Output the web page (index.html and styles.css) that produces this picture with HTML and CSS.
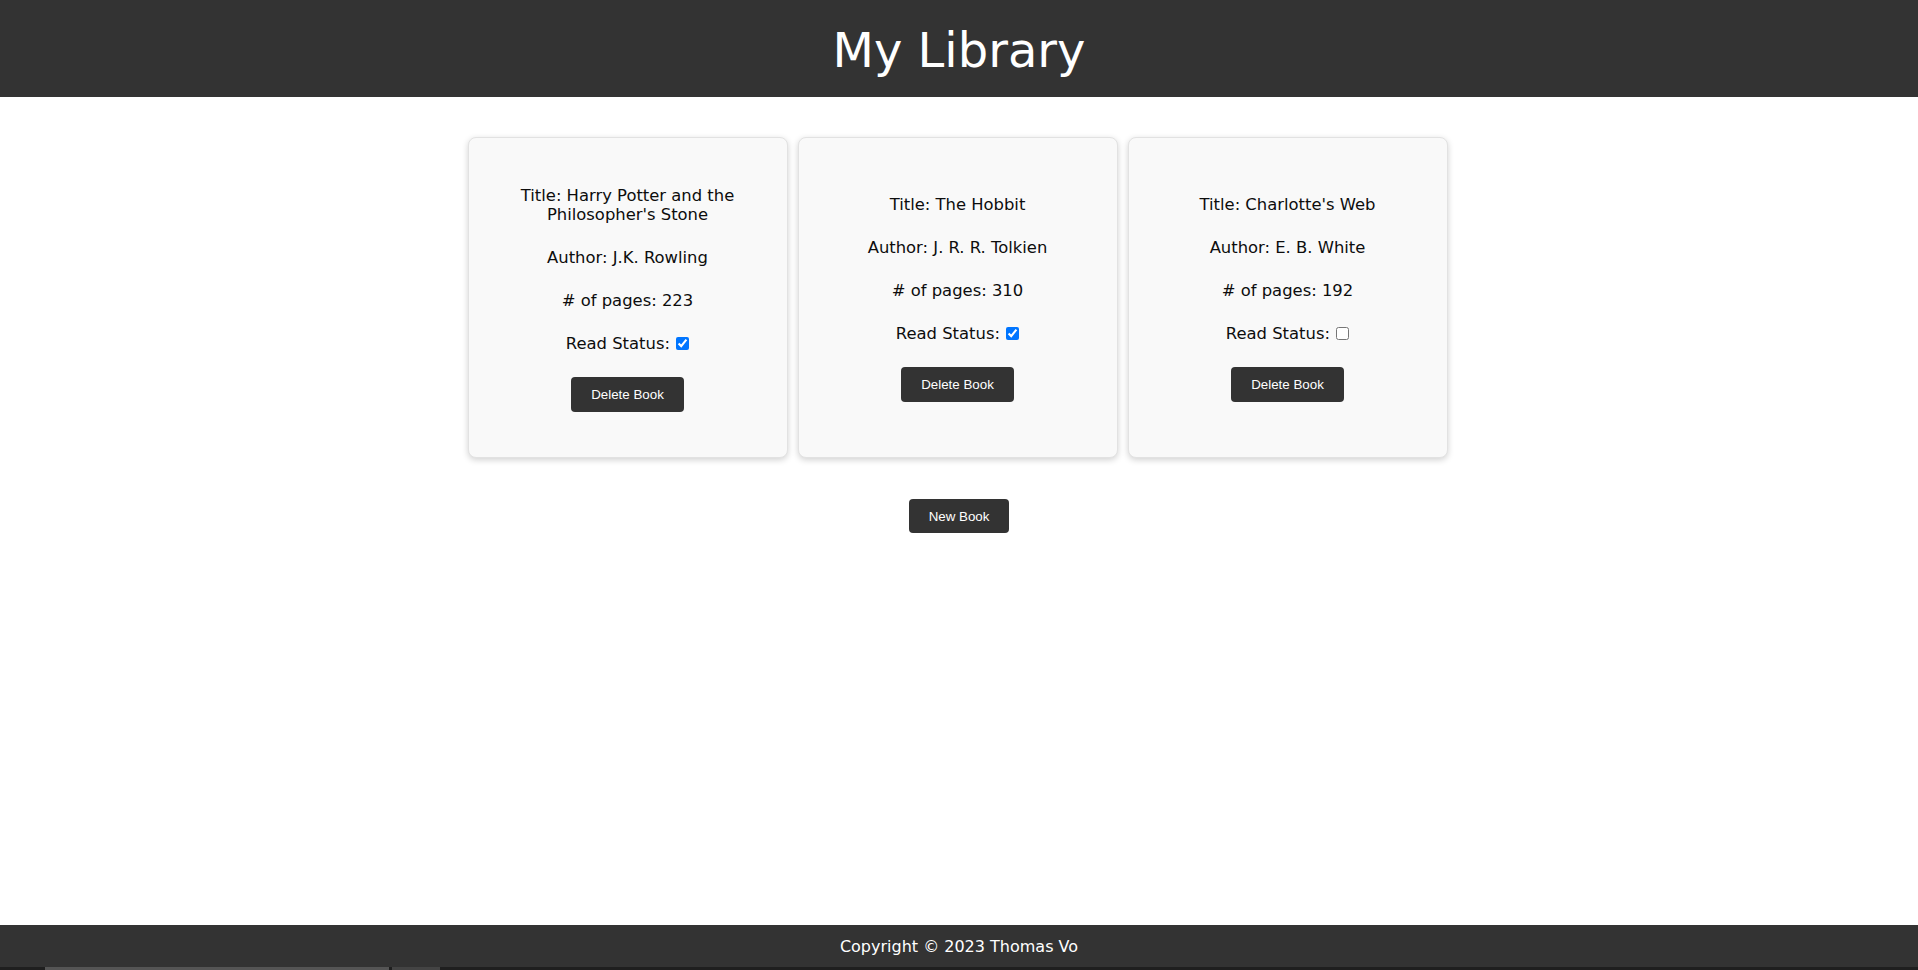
FILE: index.html
```html
<!DOCTYPE html>
<html lang="en">
<head>
<meta charset="utf-8">
<title>My Library</title>
<link rel="stylesheet" href="styles.css">
</head>
<body>
<header class="site-header">
  <h1 class="site-title">My Library</h1>
</header>
<main class="main">
  <div class="library">
    <div class="card">
      <p class="card-line">Title: Harry Potter and the Philosopher's Stone</p>
      <p class="card-line">Author: J.K. Rowling</p>
      <p class="card-line"># of pages: 223</p>
      <p class="card-line">Read Status: <input type="checkbox" class="read-box" checked></p>
      <button class="btn">Delete Book</button>
    </div>
    <div class="card">
      <p class="card-line">Title: The Hobbit</p>
      <p class="card-line">Author: J. R. R. Tolkien</p>
      <p class="card-line"># of pages: 310</p>
      <p class="card-line">Read Status: <input type="checkbox" class="read-box" checked></p>
      <button class="btn">Delete Book</button>
    </div>
    <div class="card">
      <p class="card-line">Title: Charlotte's Web</p>
      <p class="card-line">Author: E. B. White</p>
      <p class="card-line"># of pages: 192</p>
      <p class="card-line">Read Status: <input type="checkbox" class="read-box"></p>
      <button class="btn">Delete Book</button>
    </div>
  </div>
  <button class="btn btn-new">New Book</button>
</main>
<footer class="site-footer">Copyright © 2023 Thomas Vo</footer>
<div class="bottom-strip"><span class="strip-a"></span><span class="strip-b"></span></div>
</body>
</html>
```
FILE: styles.css
```css
html, body {
  margin: 0;
  padding: 0;
}
body {
  min-height: 100vh;
  display: flex;
  flex-direction: column;
  font-family: "DejaVu Sans", Verdana, sans-serif;
  background: #fff;
  color: #111;
}
.site-header {
  background: #333;
  height: 97px;
  display: flex;
  align-items: center;
  justify-content: center;
}
.site-title {
  margin: 0;
  color: #fff;
  font-weight: normal;
  font-size: 48px;
  line-height: 56px;
  padding-top: 2px;
}
.main {
  flex: 1;
  display: flex;
  flex-direction: column;
  align-items: center;
  padding-top: 40px;
}
.library {
  display: grid;
  grid-template-columns: repeat(3, 320px);
  gap: 10px;
  margin-left: -3px;
}
.card {
  box-sizing: border-box;
  height: 321px;
  background: #f9f9f9;
  border: 1px solid #e2e2e2;
  border-radius: 8px;
  box-shadow: 0 2px 6px rgba(0, 0, 0, 0.18);
  display: flex;
  flex-direction: column;
  align-items: center;
  justify-content: center;
  gap: 24px;
  padding: 22px 40px 20px;
  text-align: center;
}
.card-line {
  margin: 0;
  font-size: 16.4px;
  line-height: 19px;
  color: #0d0d0d;
}
.read-box {
  margin: 0 0 0 1px;
  width: 13px;
  height: 13px;
  vertical-align: -1px;
}
.btn {
  font-family: "Liberation Sans", Arial, sans-serif;
  font-size: 13.33px;
  line-height: 15px;
  color: #fff;
  background: #333;
  border: none;
  border-radius: 4px;
  padding: 10px 20px;
}
.btn-new {
  margin-top: 41px;
  padding: 10px 20px 9px;
}
.site-footer {
  background: #333;
  color: #fff;
  height: 42px;
  display: flex;
  align-items: center;
  justify-content: center;
  font-size: 16px;
}
.bottom-strip {
  height: 3px;
  background: #1f1f1f;
  display: flex;
  padding-left: 45px;
  gap: 3px;
}
.strip-a {
  width: 344px;
  background: #555;
}
.strip-b {
  width: 48px;
  background: #444;
}
```
